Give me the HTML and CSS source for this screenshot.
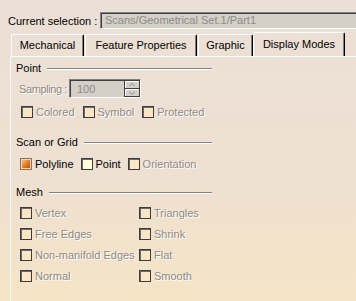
FILE: index.html
```html
<!DOCTYPE html>
<html lang="en">
<head>
  <meta charset="UTF-8" />
  <title>Display Modes</title>
  <link rel="stylesheet" href="styles.css">
</head>
<body>

<div class="selection">
  <span class="selection-label">Current selection :</span>
  <div class="field">Scans/Geometrical Set.1/Part1</div>
</div>

<div class="tabs">
  <div class="tab tab-mech">Mechanical</div>
  <div class="tab tab-feat">Feature Properties</div>
  <div class="tab tab-graph">Graphic</div>
  <div class="tab tab-disp active">Display Modes</div>
</div>

<div class="panel">
  <div class="group">
    <div class="group-title"><span>Point</span><i></i></div>
    <div class="sampling">
      <span class="off sampling-label">Sampling :</span>
      <div class="spin">
        <div class="spin-value">100</div>
        <div class="spin-btns">
          <div class="spin-btn">
            <svg width="6" height="4" viewBox="0 0 6 4"><path d="M0 3.5 L3 0.5 L6 3.5" fill="none" stroke="#909090"/></svg>
          </div>
          <div class="spin-btn">
            <svg width="6" height="4" viewBox="0 0 6 4"><path d="M0 0.5 L3 3.5 L6 0.5" fill="none" stroke="#909090"/></svg>
          </div>
        </div>
      </div>
    </div>
    <div class="row row-point">
      <label class="check off"><b class="box"></b>Colored</label>
      <label class="check off"><b class="box"></b>Symbol</label>
      <label class="check off"><b class="box"></b>Protected</label>
    </div>
  </div>

  <div class="group group-scan">
    <div class="group-title"><span>Scan or Grid</span><i></i></div>
    <div class="row row-scan">
      <label class="check"><b class="box checked"></b>Polyline</label>
      <label class="check"><b class="box light"></b>Point</label>
      <label class="check off"><b class="box"></b>Orientation</label>
    </div>
  </div>

  <div class="group group-mesh">
    <div class="group-title"><span>Mesh</span><i></i></div>
    <div class="mesh-grid">
      <label class="check off"><b class="box"></b>Vertex</label>
      <label class="check off"><b class="box"></b>Triangles</label>
      <label class="check off"><b class="box"></b>Free Edges</label>
      <label class="check off"><b class="box"></b>Shrink</label>
      <label class="check off"><b class="box"></b>Non-manifold Edges</label>
      <label class="check off"><b class="box"></b>Flat</label>
      <label class="check off"><b class="box"></b>Normal</label>
      <label class="check off"><b class="box"></b>Smooth</label>
    </div>
  </div>
</div>

</body>
</html>
```

FILE: styles.css
```css
:root {
  --bg-top: #ebe0d6;
  --bg-bottom: #f5e4c6;
  --grey-field: #d4d0c8;
  --text-off: #8e8a86;
  --dark: #404040;
  --shade: #808080;
}

* {
  box-sizing: border-box;
}

html, body {
  height: 100%;
}

body {
  margin: 0;
  overflow: hidden;
  font-family: 'Liberation Sans', Arial, sans-serif;
  font-size: 11px;
  color: #000;
  background: linear-gradient(to bottom, var(--bg-top), #eee0d2 55%, var(--bg-bottom));
  display: flex;
  flex-direction: column;
}

.off {
  color: var(--text-off);
  text-shadow: 1px 1px 0 #fff;
}

/* selection row */
.selection {
  display: flex;
  align-items: center;
  padding: 12px 0 0 8px;
  height: 29px;
  white-space: nowrap;
}

.selection-label {
  flex: none;
  width: 92px;
}

.field {
  flex: none;
  width: 270px;
  height: 17px;
  line-height: 15px;
  padding-left: 4px;
  background: var(--grey-field);
  color: var(--text-off);
  border-top: 1px solid var(--shade);
  border-left: 1px solid var(--shade);
  border-bottom: 1px solid #fff;
  border-right: 1px solid #fff;
  box-shadow: inset 1px 1px 0 var(--dark);
}

/* tabs */
.tabs {
  display: flex;
  align-items: flex-end;
  margin: 3px 0 0 11px;
  height: 24px;
}

.tab {
  height: 22px;
  line-height: 21px;
  text-align: center;
  white-space: nowrap;
  border-top: 1px solid #fff;
  border-left: 1px solid #fff;
  border-right: 1px solid #000;
  box-shadow: inset -1px 0 0 var(--shade);
  border-radius: 2px 2px 0 0;
}

.tab-mech { width: 73px; }
.tab-feat { width: 112px; margin-left: 1px; }
.tab-graph { width: 55px; margin-left: 1px; }
.tab-disp { width: 92px; }

.tab.active {
  height: 24px;
  line-height: 23px;
}

/* panel */
.panel {
  flex: 1;
  margin-left: 10px;
  border-top: 1px solid #fff;
  border-left: 1px solid #fff;
  padding: 3px 0 0 5px;
}

.group {
  width: 196px;
}

.group-title {
  display: flex;
  align-items: center;
  gap: 6px;
  height: 16px;
}

.group-title i {
  flex: 1;
  height: 2px;
  border-top: 1px solid var(--shade);
  border-bottom: 1px solid #fff;
  margin-top: 1px;
}

.sampling {
  display: flex;
  align-items: center;
  height: 21px;
  margin: 2px 0 0 3px;
}

.sampling-label {
  flex: none;
  white-space: nowrap;
  letter-spacing: -0.4px;
  margin-right: 2px;
}

.spin {
  display: flex;
  width: 72px;
  height: 19px;
  border-top: 1px solid var(--shade);
  border-left: 1px solid var(--shade);
  border-bottom: 1px solid #fff;
  border-right: 1px solid #fff;
  background: var(--grey-field);
}

.spin-value {
  flex: 1;
  padding-left: 6px;
  line-height: 17px;
  color: var(--text-off);
  border-top: 1px solid var(--dark);
  border-left: 1px solid var(--dark);
}

.spin-btns {
  display: flex;
  flex-direction: column;
  width: 16px;
  background: var(--dark);
  padding: 1px;
  gap: 1px;
}

.spin-btn {
  flex: 1;
  display: flex;
  align-items: center;
  justify-content: center;
  background: var(--grey-field);
  border-top: 1px solid #fff;
  border-left: 1px solid #fff;
}

.row {
  display: flex;
  align-items: center;
  height: 20px;
  margin: 3px 0 0 5px;
}

.row-point {
  gap: 8px;
}

.row-scan {
  gap: 7px;
  margin-top: 4px;
  margin-left: 4px;
}

.check {
  display: flex;
  align-items: center;
  gap: 3px;
  white-space: nowrap;
}

.box {
  display: block;
  flex: none;
  width: 12px;
  height: 12px;
  background: #fbe5c4;
  border: 1px solid #3c3c3c;
  box-shadow: inset 1px 1px 0 #6a6a6a;
}

.box.light {
  background: #ffffd8;
}

.box.checked {
  border-color: #8a7060;
  background: linear-gradient(135deg, #ffd090, #e07018 60%, #b04808);
  box-shadow: inset 0 0 0 1px #f8d8a8;
}

.group-scan {
  margin-top: 12px;
}

.group-mesh {
  margin-top: 10px;
}

.mesh-grid {
  display: grid;
  grid-template-columns: 119px auto;
  grid-auto-rows: 21px;
  align-items: center;
  margin: 2px 0 0 4px;
}
```
